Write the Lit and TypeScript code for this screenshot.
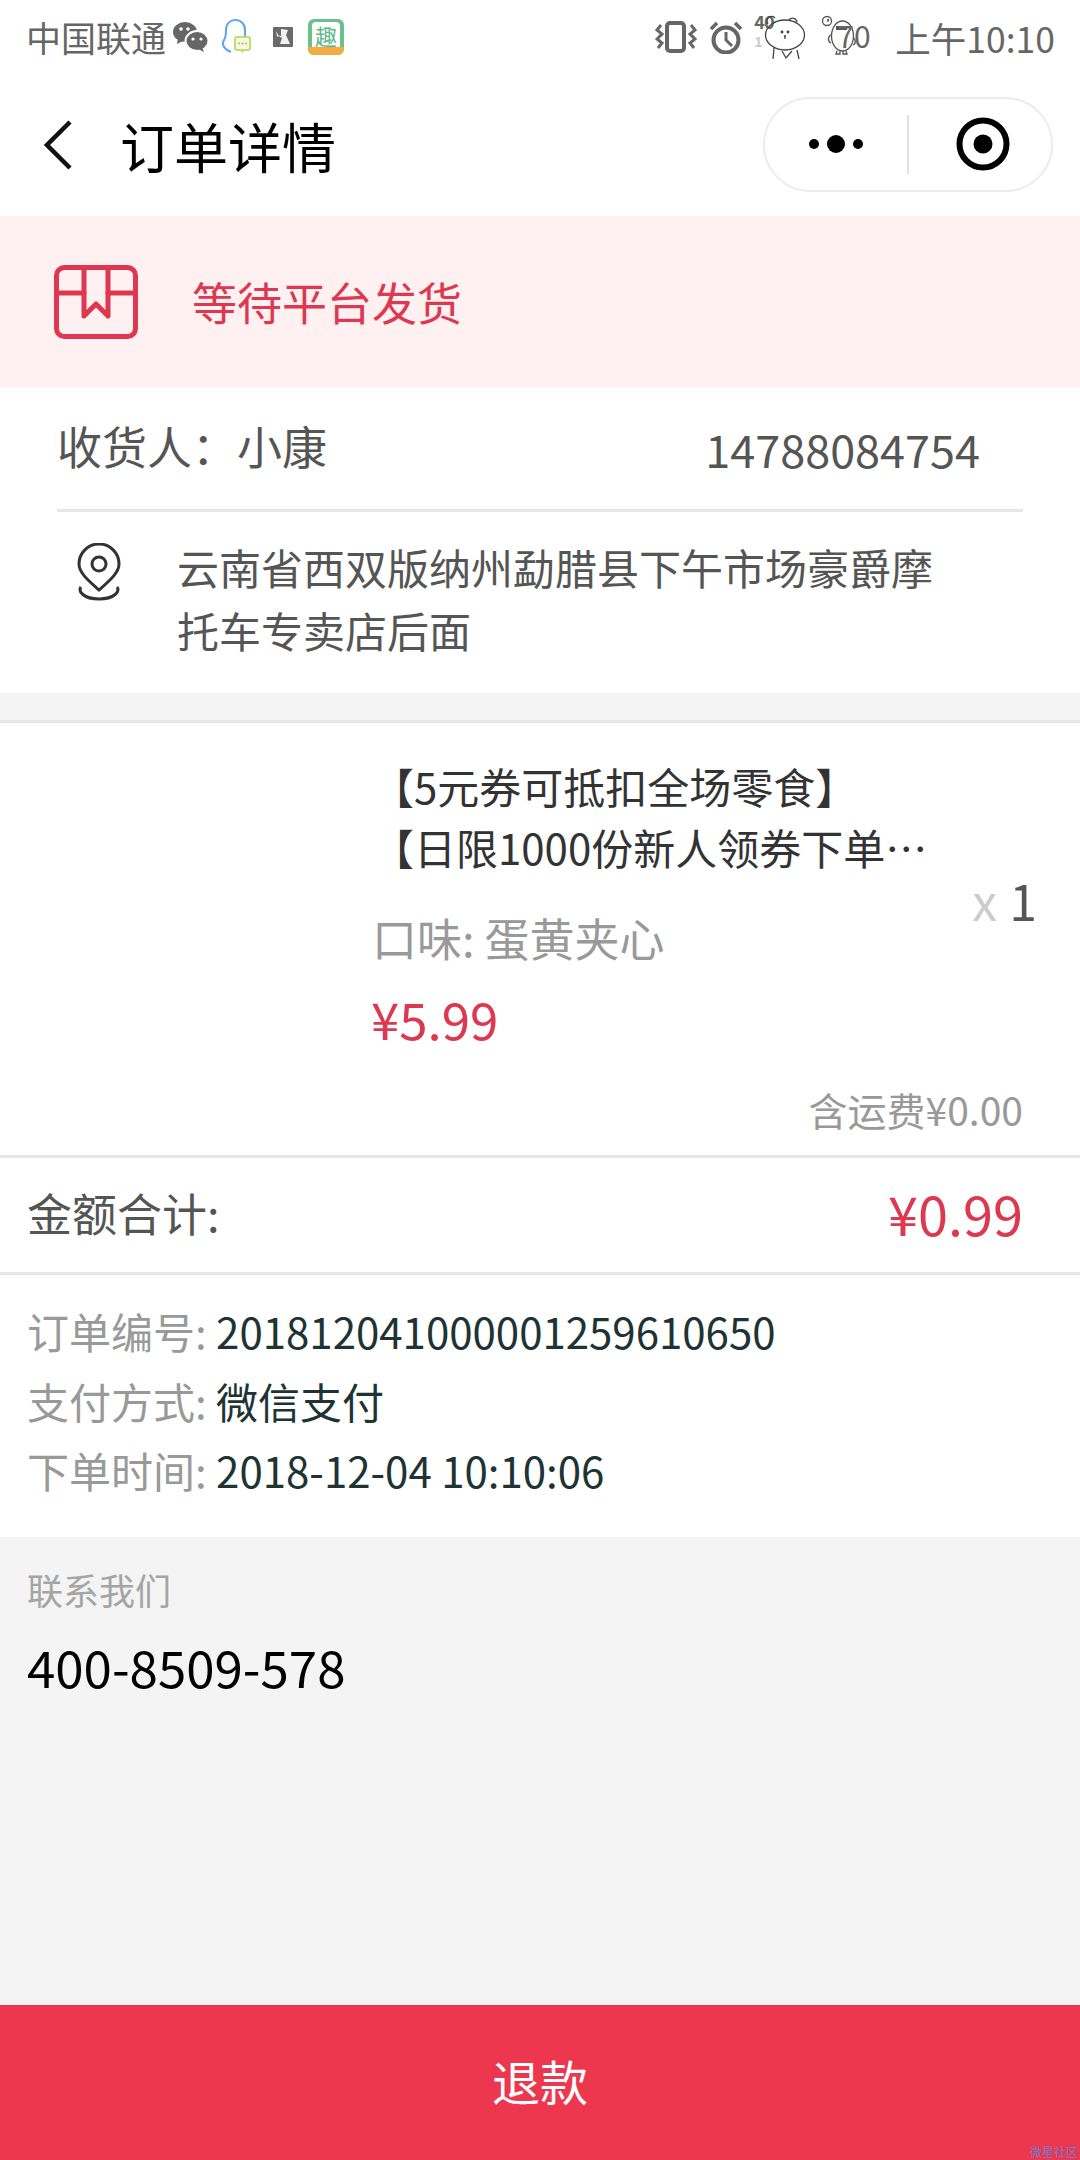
import { LitElement, html, css } from "lit";
import { customElement } from "lit/decorators.js";

@customElement("app-root")
export class AppRoot extends LitElement {
  static styles = css`
    :host {
      display: flex;
      flex-direction: column;
      width: 1080px;
      height: 2160px;
      background: #f4f4f4;
      font-family: "Noto Sans CJK SC", "Noto Sans", sans-serif;
      color: #555;
      overflow: hidden;
    }
    svg { display: block; flex: none; }

    .status {
      height: 74px;
      background: #fff;
      display: flex;
      align-items: center;
      padding: 0 25px 0 26px;
      color: #666;
      font-size: 35px;
    }
    .status .carrier { margin-right: 7px; line-height: 74px; }
    .status .spacer { flex: 1; }
    .status .time { font-size: 35.5px; margin-left: 39px; }
    .qq { margin-left: 13px; }
    .mini { margin-left: 21px; }
    .alarm { margin-left: 11px; }
    .bear { margin-left: -10px; align-self: flex-start; margin-top: 13px; }
    .app-icon {
      width: 36px;
      height: 36px;
      border-radius: 6px;
      background: #6cc08b;
      margin-left: 15px;
      position: relative;
      overflow: hidden;
      display: flex;
      justify-content: center;
      flex: none;
    }
    .app-icon .inner {
      width: 28px;
      height: 28px;
      background: #fff;
      border-radius: 4px;
      margin-top: 3px;
      color: #5fb78a;
      font-size: 22px;
      line-height: 26px;
      text-align: center;
    }
    .app-icon .foot {
      position: absolute;
      left: 0;
      right: 0;
      bottom: 0;
      height: 8px;
      background: #f3ab43;
    }
    .net {
      align-self: flex-start;
      width: 20px;
      margin: 12px 0 0 11px;
      font-size: 18px;
      letter-spacing: -1px;
      font-weight: 700;
      line-height: 18px;
      color: #666;
      flex: none;
    }
    .net .down { color: #ccc; display: block; font-size: 14px; margin-top: 2px; }
    .egg { position: relative; width: 34px; height: 42px; margin: 0 0 4px 16px; flex: none; }
    .egg .seventy {
      position: absolute;
      left: 15px;
      top: 6px;
      font-size: 30px;
      line-height: 30px;
      color: #666;
    }

    .nav {
      height: 142px;
      background: #fff;
      display: flex;
      align-items: center;
      padding-left: 44px;
      padding-right: 27px;
      color: #000;
    }
    .nav h1 {
      margin: 0 0 0 48px;
      font-size: 54px;
      font-weight: 400;
      flex: 1;
    }
    .capsule {
      width: 290px;
      height: 95px;
      box-sizing: border-box;
      border: 2px solid #ececec;
      border-radius: 48px;
      display: flex;
      align-items: center;
      margin-top: -2px;
    }
    .capsule .more { width: 142px; display: flex; justify-content: center; align-items: center; gap: 8px; }
    .capsule .more i { background: #000; border-radius: 50%; width: 10px; height: 10px; display: block; }
    .capsule .more i.big { width: 18px; height: 18px; }
    .capsule .sep { width: 2px; height: 59px; background: #e0e0e0; }
    .capsule .close { flex: 1; display: flex; justify-content: center; padding-left: 5px; }

    .banner {
      height: 171px;
      background: #fff0f2;
      display: flex;
      align-items: center;
      padding-left: 54px;
      color: #de3750;
      font-size: 45px;
    }
    .banner span { margin-left: 54px; }

    .addr { background: #fff; padding: 0 57px 32px; }
    .person {
      height: 116px;
      padding: 0 43px 6px 0;
      display: flex;
      align-items: center;
      justify-content: space-between;
      font-size: 45px;
    }
    .person .phone { margin-top: 7px; }
    .addr hr { border: 0; height: 3px; background: #e6e6e6; margin: 0 0 23px; }
    .place { display: flex; font-size: 42px; line-height: 63px; }
    .place svg { margin: 8px 56px 0 20px; }
    .place div { width: 770px; }

    .goods {
      margin-top: 27px;
      background: #fff;
      border-top: 3px solid #e6e6e6;
      border-bottom: 3px solid #e6e6e6;
      height: 432px;
      position: relative;
      padding-left: 372px;
    }
    .goods .name { padding-top: 32px; font-size: 42px; line-height: 61px; color: #333; }
    .goods .name div { white-space: nowrap; }
    .goods .flavor { font-size: 45px; line-height: 60px; color: #999; margin-top: 31px; }
    .goods .price { font-size: 51px; line-height: 60px; color: #de3750; margin: 20px 0 0 -1px; }
    .goods .ship { font-size: 39px; line-height: 50px; color: #999; text-align: right; margin: 36px 57px 0 0; }
    .goods .qty {
      position: absolute;
      right: 43px;
      top: 146px;
      font-size: 50px;
      line-height: 60px;
      color: #555;
    }
    .goods .qty b { font-weight: 400; color: #ccc; margin-right: 12px; }

    .total {
      height: 117px;
      box-sizing: border-box;
      background: #fff;
      border-bottom: 3px solid #e6e6e6;
      display: flex;
      align-items: center;
      justify-content: space-between;
      padding: 0 57px 6px 27px;
      font-size: 45px;
    }
    .total strong { font-weight: 400; font-size: 54px; color: #de3750; }

    .meta {
      background: #fff;
      padding: 21px 27px 32px;
      font-size: 42px;
      line-height: 69.5px;
      color: #1e3334;
    }
    .meta span { color: #999; }

    .contact { flex: 1; padding: 29px 27px 0; }
    .contact .label { font-size: 36px; line-height: 46px; color: #a5a5a5; }
    .contact .tel { font-size: 51px; line-height: 70px; color: #000; margin-top: 19px; }

    .refund {
      height: 155px;
      box-sizing: border-box;
      padding-bottom: 6px;
      background: #ec374f;
      color: #fff;
      font-size: 48px;
      display: flex;
      align-items: center;
      justify-content: center;
      position: relative;
    }
    .refund .mark {
      position: absolute;
      right: 2px;
      bottom: 1px;
      font-size: 12px;
      line-height: 14px;
      color: #7478cc;
    }
  `;

  render() {
    return html`
      <div class="status">
        <span class="carrier">中国联通</span>
        <svg width="36" height="30" viewBox="0 0 36 30" fill="#666">
          <ellipse cx="12" cy="10" rx="12" ry="10" />
          <path d="M5 16l-1 6 6-3z" />
          <ellipse cx="24" cy="19" rx="11.500" ry="10" stroke="#fff" stroke-width="2" />
          <path d="M29 25l2 5-6-3z" />
          <circle cx="8" cy="7" r="1.800" fill="#fff" />
          <circle cx="15" cy="7" r="1.800" fill="#fff" />
          <circle cx="20" cy="17" r="1.600" fill="#fff" />
          <circle cx="28" cy="17" r="1.600" fill="#fff" />
        </svg>
        <svg class="qq" width="30" height="36" viewBox="0 0 30 36" fill="none">
          <path d="M9 33C3 31-1 26 2 21c2-3 2-7 2-10C4 4 9 1 13 1c6 0 10 4 10 10v6" stroke="#5da6e8" stroke-width="2" />
          <rect x="13" y="18" width="15" height="13" rx="2" fill="#f6f9de" stroke="#c5da72" stroke-width="2" />
          <path d="M18 31l2.500 3 2.500-3" fill="#c5da72" />
          <circle cx="17" cy="24.500" r="1" fill="#a9b96a" />
          <circle cx="20.500" cy="24.500" r="1" fill="#a9b96a" />
          <circle cx="24" cy="24.500" r="1" fill="#a9b96a" />
        </svg>
        <svg class="mini" width="20" height="20" viewBox="0 0 20 20">
          <rect width="20" height="20" rx="1" fill="#6a6a6a" />
          <path d="M8 2l7 1-2 5 4 9H7l2-6-5-3 4 1z" fill="#f2f2f2" />
          <path d="M3 4l3 5-2 1z" fill="#ddd" />
        </svg>
        <div class="app-icon">
          <div class="inner">趣</div>
          <div class="foot"></div>
        </div>
        <div class="spacer"></div>

        <svg width="43" height="34" viewBox="0 0 43 34" fill="none" stroke="#666" stroke-width="3">
          <rect x="12" y="3" width="17" height="28" rx="3" stroke-width="4" />
          <path d="M6 5L2 10l5 4-5 5 5 4-4 5" />
          <path d="M36 5l4 5-5 4 5 5-5 4 4 5" />
        </svg>
        <svg class="alarm" width="34" height="34" viewBox="0 0 34 34" fill="none" stroke="#666" stroke-width="4">
          <circle cx="17" cy="20" r="12.500" />
          <path d="M17 12v8l6 6" stroke-width="3" />
          <path d="M2 9l6-6M32 9l-6-6" stroke-width="3.500" />
        </svg>
        <div class="net">40<span class="down">1</span></div>
        <svg class="bear" width="42" height="48" viewBox="0 0 42 48" fill="none" stroke="#444" stroke-width="1.300">
          <path d="M10 35l-1 11M33 37l2 9M18 38l4 7 6-7" />
          <path d="M4 11a4.500 4.500 0 0 1 7-6" />
          <path d="M25 7a4.500 4.500 0 0 1 8 2" />
          <ellipse cx="21" cy="22" rx="19.500" ry="15" />
          <circle cx="18" cy="19" r=".8" fill="#333" />
          <circle cx="24" cy="19" r=".8" fill="#333" />
          <path d="M20 23h2M21 23v3" />
        </svg>
        <div class="egg">
          <svg width="34" height="42" viewBox="0 0 34 42" fill="none" stroke="#555" stroke-width="1.300">
            <circle cx="5" cy="7" r="4.500" />
            <path d="M5 6h2M6 5v3" />
            <ellipse cx="20.500" cy="22" rx="11" ry="15" />
            <path d="M14 12h11v4H14z" fill="#555" stroke="none" />
            <path d="M10 20c-4 2-5 7-1 9M31 24c3 1 3 6 0 7" />
            <path d="M15 37l-1 3h4v-3M21 37v3h4l-1-3" />
          </svg>
          <span class="seventy">70</span>
        </div>
        <span class="time">上午10:10</span>
      </div>

      <div class="nav">
        <svg width="28" height="50" viewBox="0 0 28 50" fill="none" stroke="#111" stroke-width="4.500">
          <path d="M26 2L3 25l23 23" />
        </svg>
        <h1>订单详情</h1>
        <div class="capsule">
          <div class="more"><i></i><i class="big"></i><i></i></div>
          <div class="sep"></div>
          <div class="close">
            <svg width="54" height="54" viewBox="0 0 54 54">
              <circle cx="27" cy="27" r="23.500" fill="none" stroke="#000" stroke-width="6" />
              <circle cx="27" cy="27" r="9.500" />
            </svg>
          </div>
        </div>
      </div>

      <div class="banner">
        <svg width="84" height="74" viewBox="0 0 84 74" fill="none" stroke="#de3750" stroke-width="5" stroke-linejoin="round" stroke-linecap="round">
          <rect x="2.500" y="2.500" width="79" height="69" rx="8" />
          <path d="M3 28h27M54 28h27" />
          <path d="M30 3v48l12-12 12 12V3" />
        </svg>
        <span>等待平台发货</span>
      </div>

      <div class="addr">
        <div class="person">
          <span>收货人：小康</span>
          <span class="phone">14788084754</span>
        </div>
        <hr />
        <div class="place">
          <svg width="44" height="58" viewBox="0 0 44 58" fill="none" stroke="#333" stroke-width="3">
            <path d="M22 47C12 38 2 30 2 21a20 20 0 0 1 40 0c0 9-10 17-20 26z" />
            <circle cx="22" cy="21" r="7" />
            <path d="M4 44c-3 4 2 12 18 12s21-8 18-12" />
          </svg>
          <div>云南省西双版纳州勐腊县下午市场豪爵摩托车专卖店后面</div>
        </div>
      </div>

      <div class="goods">
        <div class="name">
          <div>【5元券可抵扣全场零食】</div>
          <div>【日限1000份新人领券下单…</div>
        </div>
        <div class="qty"><b>x</b>1</div>
        <div class="flavor">口味: 蛋黄夹心</div>
        <div class="price">¥5.99</div>
        <div class="ship">含运费¥0.00</div>
      </div>

      <div class="total">
        <span>金额合计:</span>
        <strong>¥0.99</strong>
      </div>

      <div class="meta">
        <div><span>订单编号:</span> 201812041000001259610650</div>
        <div><span>支付方式:</span> 微信支付</div>
        <div><span>下单时间:</span> 2018-12-04 10:10:06</div>
      </div>

      <div class="contact">
        <div class="label">联系我们</div>
        <div class="tel">400-8509-578</div>
      </div>

      <div class="refund">
        退款
        <span class="mark">微星社区</span>
      </div>
    `;
  }
}
